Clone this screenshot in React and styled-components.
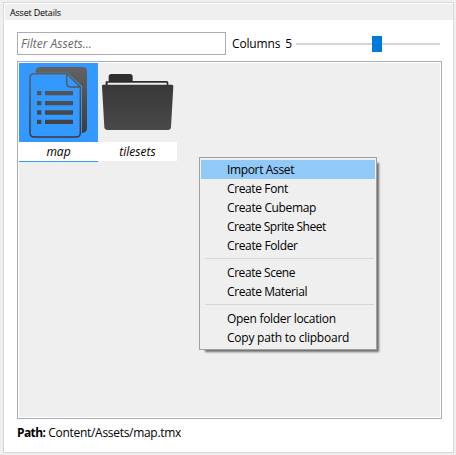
import React from 'react';
import styled, { createGlobalStyle } from 'styled-components';

const GlobalStyle = createGlobalStyle`
  * { box-sizing: border-box; }
  body {
    margin: 0;
    background: #efefef;
    color: #000;
    font: 12px/16px "Open Sans", "Noto Sans", sans-serif;
  }
`;

const Window = styled.main`
  width: 456px;
  height: 455px;
  padding: 2px 2px 2px 3px;
  overflow: hidden;
`;

const Panel = styled.section`
  height: 451px;
  border: 1px solid #d9d9d9;
  background: #fff;
  padding: 1px 0 0 1px;
`;

const PanelHeader = styled.header`
  height: 16px;
  padding-left: 5px;
  background: #efefef;
  font-size: 9px;
  line-height: 17px;
`;

const Body = styled.div`
  padding: 12px 11px 0 12px;
`;

const Toolbar = styled.div`
  display: flex;
  align-items: center;
  height: 23px;
`;

const FilterInput = styled.input`
  width: 209px;
  height: 23px;
  border: 1px solid #abadb3;
  border-radius: 0;
  padding: 0 3px;
  outline: none;
  font: italic 12px/16px "Open Sans", "Noto Sans", sans-serif;
  &::placeholder { color: #686868; opacity: 1; }
`;

const Text = styled.span`
  letter-spacing: ${(p) => p.$spacing || 0}px;
  font-weight: ${(p) => (p.$bold ? 700 : 400)};
  white-space: nowrap;
`;

const ColumnsLabel = styled.div`
  display: flex;
  justify-content: space-between;
  width: 60px;
  margin: 0 4px 0 6px;
`;

const Track = styled.div`
  display: flex;
  align-items: center;
  width: 144px;
  height: 2px;
  background: #d6d6d6;
`;

const Thumb = styled.div`
  width: 10px;
  height: 16px;
  margin-left: 76px;
  background: #007ad9;
`;

const AssetList = styled.div`
  display: flex;
  align-items: flex-start;
  width: 425px;
  height: 358px;
  margin-top: 6px;
  border: 1px solid #abadb3;
  background: #efefef;
  box-shadow: inset 0 0 0 1px #fff;
  padding: 1px;
`;

const Asset = styled.div`
  width: 79px;
  height: 99px;
  background: ${(p) => (p.$selected ? '#3399ff' : 'transparent')};
  svg { display: block; width: 79px; height: 79px; }
`;

const AssetName = styled.div`
  height: 19px;
  background: #fff;
  font-style: italic;
  line-height: 19px;
  text-align: center;
`;

const PathLine = styled.footer`
  display: flex;
  gap: 3px;
  margin-top: 6px;
`;

const Menu = styled.div`
  position: absolute;
  left: 199px;
  top: 157px;
  width: 178px;
  height: 193px;
  border: 1px solid #a0a0a0;
  background: #efefef;
  padding: 2px 1px;
  box-shadow: 4px 4px 2px -2px rgba(0, 0, 0, 0.55);
`;

const MenuItem = styled.div`
  height: 19px;
  padding-left: 26px;
  background: ${(p) => (p.$active ? '#91c9f7' : 'transparent')};
  line-height: 20px;
`;

const Separator = styled.div`
  height: 1px;
  margin: 3px 1px 4px 4px;
  background: #d7d7d7;
`;

function DocumentIcon() {
  return (
    <svg viewBox="27 21 237 237">
      <defs>
        <linearGradient id="doc" x1="0" y1="33" x2="0" y2="246" gradientUnits="userSpaceOnUse">
          <stop offset="0" stopColor="#626262" />
          <stop offset="1" stopColor="#393939" />
        </linearGradient>
      </defs>
      <path fill="url(#doc)" d="M77 50V46Q78 33 91 33H218Q231 33 231 46V217Q231 229 216 231V91L173 50Z" />
      <path fill="#3399ff" stroke="url(#doc)" strokeWidth="4.5" d="M72 53H170L211 94V230Q211 243 198 243H73Q60 243 60 230V66Q60 53 72 53Z" />
      <path fill="#3399ff" stroke="url(#doc)" strokeWidth="4.5" strokeLinejoin="round" d="M170 53V80Q170 93 183 93H211Z" />
      <g fill="url(#doc)">
        <path d="M81 105h13v13H81zM81 135h13v13H81zM81 163h13v13H81zM81 191h13v13H81z" />
        <path d="M105 105h84v13h-84zM105 135h84v13h-84zM105 163h84v13h-84zM105 191h84v13h-84z" />
      </g>
    </svg>
  );
}

function FolderIcon() {
  return (
    <svg viewBox="264 21 237 237">
      <defs>
        <linearGradient id="folder" x1="0" y1="86" x2="0" y2="222" gradientUnits="userSpaceOnUse">
          <stop offset="0" stopColor="#383838" />
          <stop offset="1" stopColor="#494949" />
        </linearGradient>
      </defs>
      <path fill="#2e2e2e" d="M287 88V76H296V62Q296 54 304 54H360Q368 54 368 62V75H470Q475 75 475 80V88Z" />
      <path fill="#efefef" d="M293 80H470V87H293Z" />
      <path fill="url(#folder)" d="M279 86H486Q490 86 490 91L483 214Q482 222 474 222H292Q284 222 283 214L276 91Q275 86 279 86Z" />
    </svg>
  );
}

const menuGroups = [
  [['Import Asset', -0.35], ['Create Font', -0.38], ['Create Cubemap', -0.37], ['Create Sprite Sheet', -0.47], ['Create Folder', -0.37]],
  [['Create Scene', -0.42], ['Create Material', -0.4]],
  [['Open folder location', -0.3], ['Copy path to clipboard', -0.23]],
];

export default function App() {
  return (
    <Window>
      <GlobalStyle />
      <Panel>
        <PanelHeader><Text $spacing={-0.2}>Asset Details</Text></PanelHeader>
        <Body>
          <Toolbar>
            <FilterInput placeholder="Filter Assets..." />
            <ColumnsLabel><Text $spacing={-0.15}>Columns</Text><Text>5</Text></ColumnsLabel>
            <Track><Thumb /></Track>
          </Toolbar>
          <AssetList>
            <Asset $selected><DocumentIcon /><AssetName>map</AssetName></Asset>
            <Asset><FolderIcon /><AssetName>tilesets</AssetName></Asset>
          </AssetList>
          <PathLine><Text $bold $spacing={-0.6}>Path:</Text><Text $spacing={-0.3}>Content/Assets/map.tmx</Text></PathLine>
        </Body>
      </Panel>
      <Menu>
        {menuGroups.map((group, g) => (
          <React.Fragment key={g}>
            {g > 0 && <Separator />}
            {group.map(([label, spacing], i) => (
              <MenuItem key={label} $active={g === 0 && i === 0}><Text $spacing={spacing}>{label}</Text></MenuItem>
            ))}
          </React.Fragment>
        ))}
      </Menu>
    </Window>
  );
}
